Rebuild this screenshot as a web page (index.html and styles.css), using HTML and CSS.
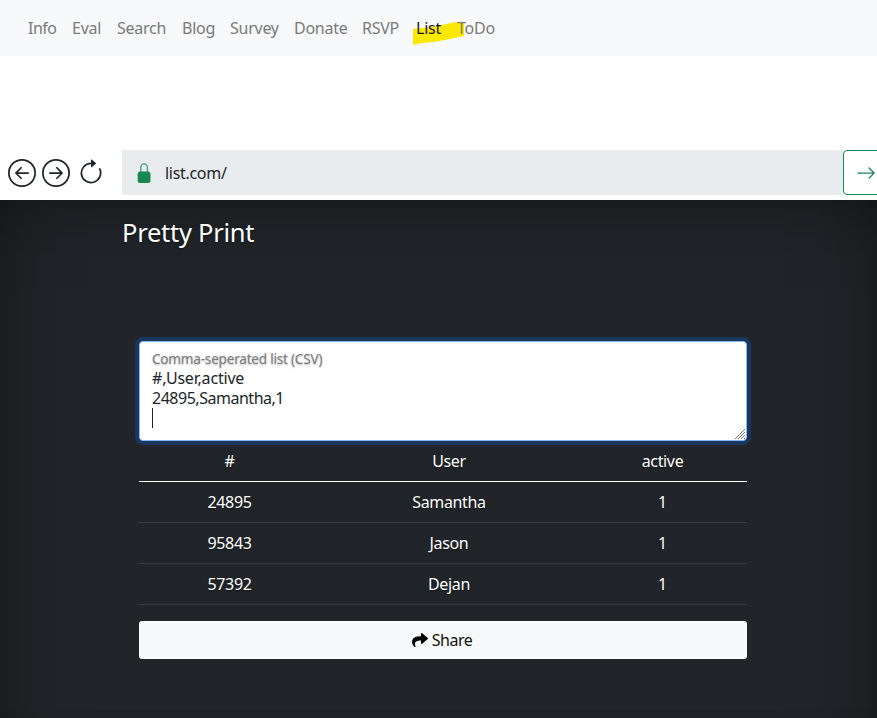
FILE: index.html
```html
<!DOCTYPE html>
<html lang="en">
<head>
<meta charset="utf-8">
<title>Pretty Print</title>
<link rel="stylesheet" href="styles.css">
</head>
<body>
<nav class="nav">
  <a>Info</a><a>Eval</a><a>Search</a><a>Blog</a><a>Survey</a><a>Donate</a><a>RSVP</a>
  <a class="current"><svg class="marker" width="51" height="25" viewBox="0 0 51 25"><path d="M0 9 20 7 40 2.500Q47 1.500 51 2V16L37 19 21 22 5 23.500V24L0 25Z" fill="#fae800"/></svg><span>List</span></a>
  <a class="todo">ToDo</a>
</nav>
<div class="browser">
  <div class="tools">
    <svg width="28" height="28" viewBox="0 0 16 16" fill="currentColor"><path fill-rule="evenodd" d="M1 8a7 7 0 1 0 14 0A7 7 0 0 0 1 8zm15 0A8 8 0 1 1 0 8a8 8 0 0 1 16 0zm-4.500-.5a.5.5 0 0 1 0 1H5.707l2.147 2.146a.5.5 0 0 1-.708.708l-3-3a.5.5 0 0 1 0-.708l3-3a.5.5 0 1 1 .708.708L5.707 7.500H11.500z"/></svg>
    <svg width="28" height="28" viewBox="0 0 16 16" fill="currentColor"><path fill-rule="evenodd" d="M1 8a7 7 0 1 0 14 0A7 7 0 0 0 1 8zm15 0A8 8 0 1 1 0 8a8 8 0 0 1 16 0zM4.500 7.500a.5.5 0 0 0 0 1h5.793l-2.147 2.146a.5.5 0 0 0 .708.708l3-3a.5.5 0 0 0 0-.708l-3-3a.5.5 0 1 0-.708.708L10.293 7.500H4.500z"/></svg>
    <svg class="reload" width="28" height="28" viewBox="0 0 16 16" fill="currentColor"><path fill-rule="evenodd" d="M8 3a5 5 0 1 0 4.546 2.914.5.5 0 0 1 .908-.417A6 6 0 1 1 8 2v1z"/><path d="M8 4.466V.534a.25.25 0 0 1 .41-.192l2.360 1.966c.12.1.12.284 0 .384L8.410 4.658A.25.25 0 0 1 8 4.466z"/></svg>
  </div>
  <div class="address">
    <svg width="20" height="20" viewBox="0 0 20 20"><rect x="3.700" y="8.500" width="12.800" height="11.500" rx="2.500" fill="#198754"/><path d="M6.800 9V4.500a3.300 3.700 0 0 1 6.600 0V9" fill="none" stroke="#198754" stroke-opacity=".8" stroke-width="1.300"/></svg>
    <span>list.com/</span>
  </div>
  <div class="go"><svg width="20" height="20" viewBox="0 0 16 16" fill="#198754"><path fill-rule="evenodd" d="M1 8a.5.5 0 0 1 .5-.5h11.793l-3.147-3.146a.5.5 0 0 1 .708-.708l4 4a.5.5 0 0 1 0 .708l-4 4a.5.5 0 0 1-.708-.708L13.293 8.500H1.500A.5.5 0 0 1 1 8z"/></svg></div>
</div>
<main class="page">
  <h1>Pretty Print</h1>
  <div class="content">
    <div class="field">
      <label>Comma-seperated list (CSV)</label>
      <div class="value"><div>#,User,active</div><div class="row">24895,Samantha,1</div><div class="caret"></div></div>
      <svg class="grip" width="12" height="12" viewBox="0 0 12 12"><path d="M1 11 11 1M4 11l7-7M7 11l4-4M10 11l1-1" stroke="#777" fill="none"/></svg>
    </div>
    <table>
      <colgroup><col class="c1"><col class="c2"><col class="c3"></colgroup>
      <thead><tr><th>#</th><th>User</th><th>active</th></tr></thead>
      <tbody>
        <tr><td>24895</td><td>Samantha</td><td>1</td></tr>
        <tr><td>95843</td><td>Jason</td><td>1</td></tr>
        <tr><td>57392</td><td>Dejan</td><td>1</td></tr>
      </tbody>
    </table>
    <div class="share"><svg width="16" height="16" viewBox="0 0 512 512"><path fill="#000" d="M503.700 189.800 327.700 37.900C312.300 24.500 288 35.300 288 56v80.100C127.400 137.900 0 170.100 0 322.300c0 61.400 39.600 122.300 83.300 154.100 13.700 9.900 33.100-2.500 28.100-18.600C66.100 312.800 132.900 274.300 288 272.100V360c0 20.700 24.300 31.500 39.700 18.200l176-152c11.100-9.600 11.100-26.800 0-36.400z"/></svg><span>Share</span></div>
  </div>
</main>
</body>
</html>
```
FILE: styles.css
```css
* { box-sizing: border-box; }
html, body { height: 718px; overflow: hidden; }
body {
  margin: 0;
  background: #fff;
  color: #212529;
  font: 16px/24px "Noto Sans", sans-serif;
}
.nav {
  display: grid;
  grid-template-columns: 44px 45px 65px 48px 64px 68px 54px 41px 54px;
  height: 56px;
  padding: 16px 20px;
  background: #f8f9fa;
  color: #797a7b;
  letter-spacing: -.25px;
  white-space: nowrap;
}
.nav a { padding: 0 8px; }
.nav a:first-child { letter-spacing: -.5px; }
.current { position: relative; color: #1a1a1b; }
.current span, .todo { position: relative; }
.marker { position: absolute; left: 5px; top: 4px; }
.browser {
  display: flex;
  align-items: center;
  height: 45px;
  margin-top: 94px;
  overflow: hidden;
}
.tools {
  display: flex;
  flex: none;
  gap: 6px;
  width: 122px;
  padding-left: 8px;
}
.reload { margin-left: 1px; }
.address {
  display: flex;
  flex: none;
  align-items: center;
  gap: 11px;
  width: 721px;
  height: 45px;
  padding: 1px 0 0 12px;
  background: #e9ecef;
  letter-spacing: -.3px;
}
.go {
  display: flex;
  flex: none;
  align-items: center;
  width: 48px;
  height: 45px;
  padding-left: 12px;
  border: 1px solid #198754;
  border-radius: 4px;
}
.page {
  height: 518px;
  margin-top: 5px;
  padding: 15px 122px 0;
  background: #212529;
  color: #fff;
  box-shadow: inset 0 80px 80px -80px rgba(0, 0, 0, .38), inset 80px 0 80px -80px rgba(0, 0, 0, .38), inset -80px 0 80px -80px rgba(0, 0, 0, .38);
  text-shadow: 0 1px 2px rgba(0, 0, 0, .5);
}
h1 {
  margin: 0;
  font-size: 25.500px;
  font-weight: 400;
  line-height: 34px;
  letter-spacing: -.27px;
}
.content { width: 608px; margin: 92px 0 0 17px; }
.field {
  position: relative;
  height: 100px;
  padding: 7px 12px;
  background: #fff;
  border: 1px solid #86b7fe;
  border-radius: 4px;
  box-shadow: 0 0 0 4px #1b365d;
  color: #212529;
}
.field label {
  display: block;
  height: 19px;
  color: #7a7c7f;
  font-size: 13.600px;
  line-height: 20px;
  letter-spacing: -.23px;
  text-shadow: 0 1px 2px rgba(0, 0, 0, .3);
}
.value { line-height: 20px; letter-spacing: -.2px; text-shadow: none; }
.row { letter-spacing: -.48px; }
.caret { width: 1px; height: 20px; background: #212529; }
.grip { position: absolute; right: 0; bottom: 0; }
table {
  width: 608px;
  table-layout: fixed;
  border-collapse: separate;
  border-spacing: 0;
  text-align: center;
  letter-spacing: -.35px;
}
.c1 { width: 181px; }
.c2 { width: 258px; }
.c3 { width: 169px; }
th, td { height: 41px; padding: 0; font-weight: 400; border-bottom: 1px solid #373b3e; }
th { border-bottom-color: #fff; }
.share {
  display: flex;
  align-items: center;
  justify-content: center;
  gap: 4px;
  height: 38px;
  margin-top: 16px;
  padding-right: 2px;
  background: #f8f9fa;
  border-radius: 3px;
  color: #111;
  text-shadow: none;
  letter-spacing: -.5px;
}
```
